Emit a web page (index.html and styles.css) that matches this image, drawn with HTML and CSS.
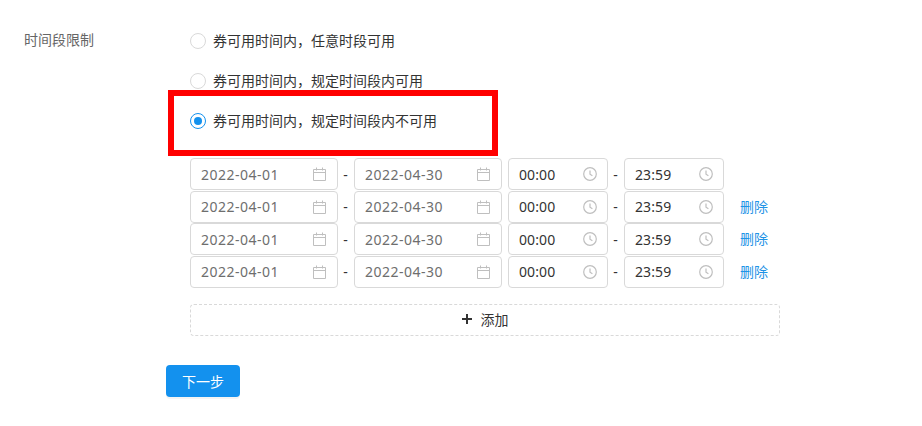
FILE: index.html
```html
<!DOCTYPE html>
<html lang="zh">
<head>
    <meta charset="UTF-8">
    <title>时间段限制</title>
    <link rel="stylesheet" href="styles.css">
</head>
<body>
    <svg class="icon-defs" width="0" height="0">
        <symbol id="cal" viewBox="0 0 13 14">
            <path d="M.5 2.5h12v11H.5zM.5 5.5h12M3.5.5v3M9.5.5v3" fill="none" stroke="currentColor"/>
        </symbol>
        <symbol id="clock" viewBox="0 0 14 14">
            <circle cx="7" cy="7" r="6.3" fill="none" stroke="currentColor" stroke-width="1.2"/>
            <path d="M7 3.5v3.7l2.4 1.6" fill="none" stroke="currentColor" stroke-width="1.2"/>
        </symbol>
    </svg>

    <div class="form-row">
        <div class="label">时间段限制</div>
        <div class="content">
            <label class="radio"><span class="dot"></span>券可用时间内，任意时段可用</label>
            <label class="radio"><span class="dot"></span>券可用时间内，规定时间段内可用</label>
            <label class="radio checked"><span class="dot"></span>券可用时间内，规定时间段内不可用</label>

            <div class="ranges">
                <div class="range">
                    <div class="input date">2022-04-01<svg><use href="#cal"/></svg></div>
                    <span class="sep">-</span>
                    <div class="input date">2022-04-30<svg><use href="#cal"/></svg></div>
                    <div class="input time">00:00<svg><use href="#clock"/></svg></div>
                    <span class="sep">-</span>
                    <div class="input time">23:59<svg><use href="#clock"/></svg></div>
                </div>
                <div class="range">
                    <div class="input date">2022-04-01<svg><use href="#cal"/></svg></div>
                    <span class="sep">-</span>
                    <div class="input date">2022-04-30<svg><use href="#cal"/></svg></div>
                    <div class="input time">00:00<svg><use href="#clock"/></svg></div>
                    <span class="sep">-</span>
                    <div class="input time">23:59<svg><use href="#clock"/></svg></div>
                    <a class="del">删除</a>
                </div>
                <div class="range">
                    <div class="input date">2022-04-01<svg><use href="#cal"/></svg></div>
                    <span class="sep">-</span>
                    <div class="input date">2022-04-30<svg><use href="#cal"/></svg></div>
                    <div class="input time">00:00<svg><use href="#clock"/></svg></div>
                    <span class="sep">-</span>
                    <div class="input time">23:59<svg><use href="#clock"/></svg></div>
                    <a class="del">删除</a>
                </div>
                <div class="range">
                    <div class="input date">2022-04-01<svg><use href="#cal"/></svg></div>
                    <span class="sep">-</span>
                    <div class="input date">2022-04-30<svg><use href="#cal"/></svg></div>
                    <div class="input time">00:00<svg><use href="#clock"/></svg></div>
                    <span class="sep">-</span>
                    <div class="input time">23:59<svg><use href="#clock"/></svg></div>
                    <a class="del">删除</a>
                </div>
            </div>

            <button class="add"><span class="plus"></span>添加</button>
        </div>
    </div>

    <button class="next">下一步</button>

    <!-- annotation drawn over the screenshot -->
    <div class="highlight"></div>
</body>
</html>
```

FILE: styles.css
```css
* {
    margin: 0;
    padding: 0;
    box-sizing: border-box;
}

body {
    font-family: "Noto Sans", "Noto Sans CJK SC", sans-serif;
    font-size: 14px;
    color: #333;
    background: #fff;
    position: relative;
    width: 922px;
    height: 426px;
    overflow: hidden;
    padding: 30px 0 0 24px;
}

.icon-defs {
    position: absolute;
}

.form-row {
    display: flex;
}

.label {
    width: 166px;
    line-height: 20px;
    color: #666;
}

.radio {
    display: flex;
    align-items: center;
    height: 22px;
    margin-bottom: 18px;
    line-height: 22px;
}

.dot {
    width: 16px;
    height: 16px;
    margin-right: 7px;
    border: 1px solid #d9d9d9;
    border-radius: 50%;
    position: relative;
}

.checked .dot {
    border-color: #1391ee;
}

.checked .dot::after {
    content: "";
    position: absolute;
    left: 3px;
    top: 3px;
    width: 8px;
    height: 8px;
    border-radius: 50%;
    background: #1391ee;
}

.ranges {
    display: flex;
    flex-direction: column;
    gap: 0.5px;
    margin-top: 26px;
}

.range {
    display: flex;
    align-items: center;
    height: 32px;
}

.input {
    display: flex;
    align-items: center;
    justify-content: space-between;
    height: 32px;
    padding: 0 10px;
    border: 1px solid #d9d9d9;
    border-radius: 4px;
}

.input svg {
    width: 14px;
    height: 14px;
    color: #bfbfbf;
}

.date {
    width: 148px;
    padding-right: 11px;
    color: #6e6e6e;
    letter-spacing: 0.5px;
}

.date svg {
    width: 13px;
}

.time {
    width: 100px;
    margin-left: 6px;
    letter-spacing: 0.1px;
}

.sep {
    width: 15px;
    margin-right: 1px;
    text-align: center;
}

.sep + .time {
    margin-left: 0;
}

.del {
    margin: 0 0 2px 16px;
    color: #1f93e6;
}

.add {
    display: flex;
    align-items: center;
    justify-content: center;
    width: 590px;
    height: 32px;
    margin-top: 16px;
    padding-bottom: 1px;
    font: inherit;
    color: #333;
    background: #fff;
    border: 1px dashed #d9d9d9;
    border-radius: 4px;
}

.plus {
    width: 10px;
    height: 10px;
    margin-right: 9px;
    background:
        linear-gradient(#333, #333) center / 100% 2px no-repeat,
        linear-gradient(#333, #333) center / 2px 100% no-repeat;
}

.next {
    display: block;
    width: 74px;
    height: 32px;
    margin: 29px 0 0 142px;
    font: inherit;
    color: #fff;
    background: #1391ee;
    border: none;
    border-radius: 4px;
    box-shadow: 0 2px 0 rgba(0, 0, 0, 0.045);
}

.highlight {
    position: absolute;
    left: 168px;
    top: 90px;
    width: 330px;
    height: 66px;
    border: 6px solid #f00;
}
```
